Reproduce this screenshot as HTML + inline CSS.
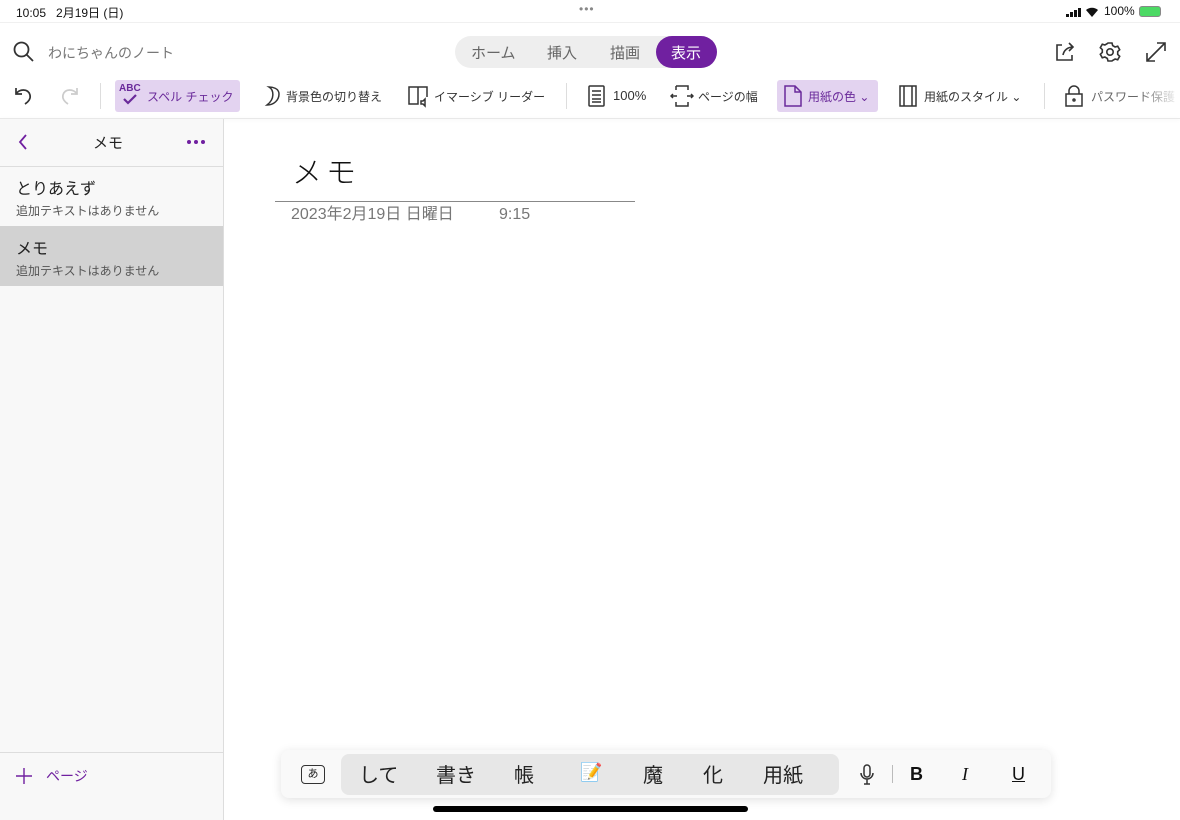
<!DOCTYPE html>
<html><head><meta charset="utf-8"><style>
*{margin:0;padding:0;box-sizing:border-box}
body{width:1180px;height:820px;overflow:hidden;background:#fff;font-family:"Liberation Sans","Noto Sans CJK JP",sans-serif;color:#222;position:relative}
.a{position:absolute;white-space:nowrap}
.tb{font-size:12px;color:#333;top:88px}
svg{position:absolute}
</style></head><body>
<div class="a" style="left:16px;top:4px;font-size:12px;color:#111">10:05&nbsp;&nbsp;&nbsp;2月19日 (日)</div>
<div class="a" style="left:579px;top:2px;font-size:12px;color:#888;letter-spacing:1px">•••</div>
<div class="a" style="left:1066px;top:14px;width:3px;height:3px;background:#111"></div>
<div class="a" style="left:1070px;top:12px;width:3px;height:5px;background:#111"></div>
<div class="a" style="left:1074px;top:10px;width:3px;height:7px;background:#111"></div>
<div class="a" style="left:1078px;top:8px;width:3px;height:9px;background:#111"></div>
<svg style="left:1085px;top:6px" width="14" height="12" viewBox="0 0 14 12"><path d="M1 4a9 9 0 0112 0L7 11z" fill="#111"/></svg>
<div class="a" style="left:1104px;top:4px;font-size:12px;color:#111">100%</div>
<div class="a" style="left:1139px;top:6px;width:22px;height:11px;border:1px solid #888;border-radius:3px;background:#4cd964"></div>
<div class="a" style="left:0;top:22px;width:1180px;height:1px;background:#f0f0f0"></div>
<svg style="left:12px;top:40px" width="24" height="24" viewBox="0 0 24 24" fill="none" stroke="#333" stroke-width="1.8"><circle cx="9.5" cy="9.5" r="7"/><path d="M14.5 14.5L21 21"/></svg>
<div class="a" style="left:48px;top:43px;font-size:14px;color:#777">わにちゃんのノート</div>
<div class="a" style="left:455px;top:36px;width:262px;height:32px;border-radius:16px;background:#eeeeee"></div>
<div class="a" style="left:471px;top:42px;font-size:15px;color:#666">ホーム</div>
<div class="a" style="left:547px;top:42px;font-size:15px;color:#666">挿入</div>
<div class="a" style="left:610px;top:42px;font-size:15px;color:#666">描画</div>
<div class="a" style="left:656px;top:36px;width:61px;height:32px;border-radius:16px;background:#7020a0"></div>
<div class="a" style="left:671px;top:42px;font-size:15px;color:#fff">表示</div>
<svg style="left:1054px;top:41px" width="22" height="22" viewBox="0 0 22 22" fill="none" stroke="#333" stroke-width="1.6"><path d="M8 4H3v15h15v-5M9 14c1-5 5-8 10-8M15 2l4 4-4 4"/></svg>
<svg style="left:1099px;top:41px" width="22" height="22" viewBox="0 0 22 22" fill="none" stroke="#333" stroke-width="1.6"><circle cx="11" cy="11" r="3.2"/><path d="M9 2h4l.7 2.6 2.4 1.4 2.6-.8 2 3.5-2 1.900v2.8l2 1.9-2 3.5-2.6-.8-2.4 1.4L13 20H9l-.7-2.6-2.4-1.4-2.6.8-2-3.5 2-1.9V8.6l-2-1.9 2-3.5 2.6.8 2.4-1.4z"/></svg>
<svg style="left:1145px;top:41px" width="22" height="22" viewBox="0 0 22 22" fill="none" stroke="#333" stroke-width="1.6"><path d="M2 20L20 2M12 2h8v8M2 12v8h8"/></svg>
<svg style="left:12px;top:84px" width="24" height="24" viewBox="0 0 24 24" fill="none" stroke="#333" stroke-width="1.7"><path d="M4 4v6h6M4 10c3-5 12-6 14 1 1 4-2 7-5 9"/></svg>
<svg style="left:57px;top:84px" width="24" height="24" viewBox="0 0 24 24" fill="none" stroke="#ccc" stroke-width="1.7"><path d="M20 4v6h-6M20 10c-3-5-12-6-14 1-1 4 2 7 5 9"/></svg>
<div class="a" style="left:100px;top:83px;width:1px;height:26px;background:#ddd"></div>
<div class="a" style="left:115px;top:80px;width:125px;height:32px;border-radius:3px;background:#e3d3f0"></div>
<div class="a" style="left:119px;top:83px;font-size:10px;font-weight:bold;color:#6a2a9a">ABC</div>
<svg style="left:122px;top:94px" width="16" height="12" viewBox="0 0 16 12" fill="none" stroke="#6a2a9a" stroke-width="2.2"><path d="M2 5l4 4 8-8"/></svg>
<div class="a tb" style="left:147px;color:#6a2a9a">スペル チェック</div>
<svg style="left:259px;top:84px" width="22" height="24" viewBox="0 0 22 24" fill="none" stroke="#333" stroke-width="1.5"><path d="M10 3c5 3 6 12-2 18 7 0 12-5 12-11S13 3 10 3z"/></svg>
<div class="a tb" style="left:286px">背景色の切り替え</div>
<svg style="left:407px;top:84px" width="24" height="24" viewBox="0 0 24 24" fill="none" stroke="#333" stroke-width="1.5"><path d="M2 3h9v17H2zM11 3h9v10M14 17h2l2-2v7l-2-2h-2z"/></svg>
<div class="a tb" style="left:434px">イマーシブ リーダー</div>
<div class="a" style="left:566px;top:83px;width:1px;height:26px;background:#ddd"></div>
<svg style="left:587px;top:84px" width="20" height="24" viewBox="0 0 20 24" fill="none" stroke="#333" stroke-width="1.5"><rect x="2" y="2" width="15" height="20" rx="1"/><path d="M5 7h9M5 11h9M5 15h9M5 18h9"/></svg>
<div class="a tb" style="left:613px;font-size:13px;top:88px">100%</div>
<svg style="left:670px;top:84px" width="24" height="24" viewBox="0 0 24 24" fill="none" stroke="#333" stroke-width="1.5"><path d="M6 2h12v4M6 2v4M6 18v4h12v-4M1 12h6M3 10l-2 2 2 2M17 12h6M21 10l2 2-2 2"/></svg>
<div class="a tb" style="left:698px">ページの幅</div>
<div class="a" style="left:777px;top:80px;width:101px;height:32px;border-radius:3px;background:#e3d3f0"></div>
<svg style="left:783px;top:84px" width="20" height="24" viewBox="0 0 20 24" fill="none" stroke="#6a2a9a" stroke-width="1.5"><path d="M2 2h10l6 6v14H2zM12 2v6h6"/></svg>
<div class="a tb" style="left:808px;color:#6a2a9a">用紙の色 ⌄</div>
<svg style="left:898px;top:84px" width="20" height="24" viewBox="0 0 20 24" fill="none" stroke="#333" stroke-width="1.5"><rect x="2" y="2" width="16" height="20"/><path d="M6 2v20M14 2v20"/></svg>
<div class="a tb" style="left:924px">用紙のスタイル ⌄</div>
<div class="a" style="left:1044px;top:83px;width:1px;height:26px;background:#ddd"></div>
<svg style="left:1064px;top:84px" width="20" height="24" viewBox="0 0 20 24" fill="none" stroke="#333" stroke-width="1.5"><rect x="2" y="10" width="16" height="12"/><path d="M5 10V7a5 5 0 0110 0v3"/><circle cx="10" cy="16" r="1"/></svg>
<div class="a tb" style="left:1091px;color:#666">パスワード保護</div>
<div class="a" style="left:1140px;top:80px;width:40px;height:32px;background:linear-gradient(90deg,rgba(255,255,255,0),#fff)"></div>
<div class="a" style="left:0;top:118px;width:1180px;height:1px;background:#e8e8e8;box-shadow:0 1px 3px rgba(0,0,0,.08)"></div>
<div class="a" style="left:0;top:119px;width:224px;height:701px;background:#f8f8f8;border-right:1px solid #ddd"></div>
<svg style="left:16px;top:133px" width="14" height="18" viewBox="0 0 14 18" fill="none" stroke="#7020a0" stroke-width="1.8"><path d="M10 2L4 9l6 7"/></svg>
<div class="a" style="left:93px;top:132px;font-size:15px;color:#222">メモ</div>
<div class="a" style="left:187px;top:140px;width:4px;height:4px;border-radius:2px;background:#7020a0"></div>
<div class="a" style="left:194px;top:140px;width:4px;height:4px;border-radius:2px;background:#7020a0"></div>
<div class="a" style="left:201px;top:140px;width:4px;height:4px;border-radius:2px;background:#7020a0"></div>
<div class="a" style="left:0;top:166px;width:223px;height:1px;background:#ddd"></div>
<div class="a" style="left:16px;top:175px;font-size:16px;color:#222">とりあえず</div>
<div class="a" style="left:16px;top:202px;font-size:12px;color:#555">追加テキストはありません</div>
<div class="a" style="left:0;top:226px;width:223px;height:60px;background:#d2d2d2"></div>
<div class="a" style="left:16px;top:235px;font-size:16px;color:#222">メモ</div>
<div class="a" style="left:16px;top:262px;font-size:12px;color:#555">追加テキストはありません</div>
<div class="a" style="left:0;top:752px;width:223px;height:1px;background:#ddd"></div>
<svg style="left:15px;top:767px" width="18" height="18" viewBox="0 0 18 18" stroke="#7020a0" stroke-width="1.4"><path d="M9 1v16M1 9h16"/></svg>
<div class="a" style="left:46px;top:766px;font-size:14px;color:#7020a0">ページ</div>
<div class="a" style="left:292px;top:148px;font-size:30px;font-weight:300;color:#111;letter-spacing:4px">メモ</div>
<div class="a" style="left:275px;top:201px;width:360px;height:1px;background:#888"></div>
<div class="a" style="left:291px;top:204px;height:22px;line-height:22px;font-size:16px;color:#777"><span style="display:inline-block;width:208px">2023年2月19日 日曜日</span><span>9:15</span></div>
<div class="a" style="left:281px;top:750px;width:770px;height:48px;border-radius:8px;background:#f9f9f9;box-shadow:0 2px 10px rgba(0,0,0,.12)"></div>
<div class="a" style="left:341px;top:754px;width:498px;height:41px;border-radius:8px;background:#e7e7e7"></div>
<div class="a" style="left:301px;top:765px;width:24px;height:19px;border:1.5px solid #333;border-radius:4px;font-size:11px;text-align:center;line-height:16px">あ</div>
<div class="a" style="left:359px;top:759px;font-size:20px;color:#222">して</div>
<div class="a" style="left:436px;top:759px;font-size:20px;color:#222">書き</div>
<div class="a" style="left:514px;top:759px;font-size:20px;color:#222">帳</div>
<div class="a" style="left:580px;top:762px;font-size:18px;color:#c90">📝</div>
<div class="a" style="left:643px;top:759px;font-size:20px;color:#222">魔</div>
<div class="a" style="left:703px;top:759px;font-size:20px;color:#222">化</div>
<div class="a" style="left:763px;top:759px;font-size:20px;color:#222">用紙</div>
<svg style="left:858px;top:763px" width="18" height="24" viewBox="0 0 18 24" fill="none" stroke="#333" stroke-width="1.5"><rect x="6" y="2" width="6" height="12" rx="3"/><path d="M3 10a6 6 0 0012 0M9 16v5M6 21h6"/></svg>
<div class="a" style="left:892px;top:765px;width:1px;height:18px;background:#bbb"></div>
<div class="a" style="left:910px;top:764px;font-size:18px;font-weight:bold;color:#111">B</div>
<div class="a" style="left:962px;top:764px;font-size:18px;font-style:italic;font-family:'Liberation Serif',serif;color:#111">I</div>
<div class="a" style="left:1012px;top:764px;font-size:18px;text-decoration:underline;color:#111">U</div>
<div class="a" style="left:433px;top:806px;width:315px;height:6px;border-radius:3px;background:#000"></div>
</body></html>
